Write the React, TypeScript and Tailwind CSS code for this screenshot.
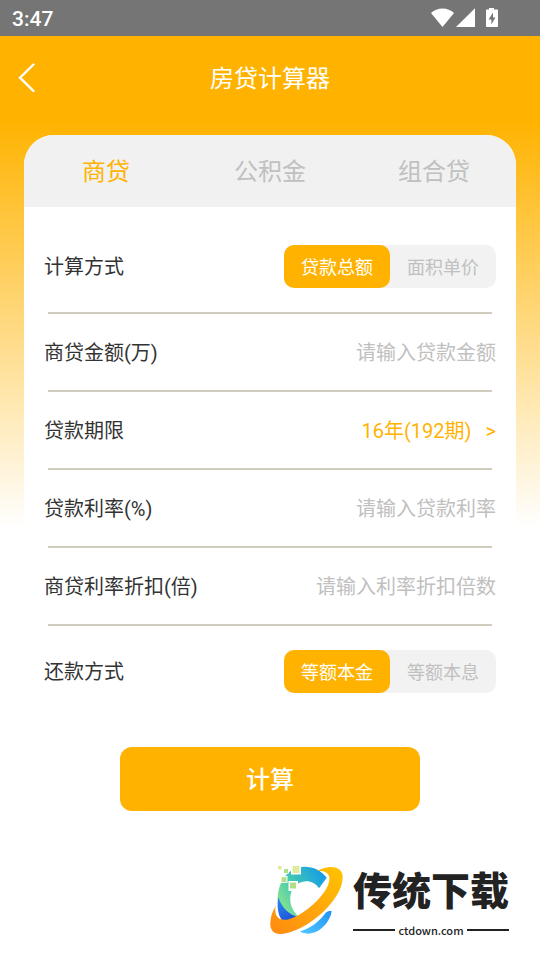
import { useState } from 'react';
import type { ReactNode } from 'react';
import clsx from 'clsx';

const tabs = ['商贷', '公积金', '组合贷'];
const calcModes = ['贷款总额', '面积单价'];
const repayModes = ['等额本金', '等额本息'];

function StatusBar() {
  return (
    <div className="flex h-9 items-center justify-between bg-[#757575] pr-10 pl-3 text-white">
      <span className="pt-0.5 text-[21px] leading-9 font-medium">3:47</span>
      <svg width="70" height="20" viewBox="0 0 70 20" fill="currentColor" aria-hidden="true">
        <path d="M12.500 19 1 5C4.200 2 8.200 .5 12.500 .5S20.800 2 24 5Z" />
        <path d="M26 19 45 .2V19Z" />
        <path
          fillRule="evenodd"
          d="M59 -.5h5v2h3.200c.5 0 .8.300.8.800v15.900c0 .5-.3.800-.8.800H56.800c-.5 0-.8-.3-.8-.8V2.300c0-.5.300-.8.800-.8H59ZM63 4.500 58.600 11.500H61.400V16.500L65.400 9.500H63Z"
        />
      </svg>
    </div>
  );
}

interface SegmentedProps {
  label: string;
  options: string[];
  value: string;
  onChange: (value: string) => void;
}

function Segmented({ label, options, value, onChange }: SegmentedProps) {
  return (
    <div role="group" aria-label={label} className="flex rounded-[10px] bg-[#f2f2f2]">
      {options.map((option) => (
        <button
          key={option}
          type="button"
          aria-pressed={option === value}
          onClick={() => onChange(option)}
          className={clsx(
            'h-[43px] w-[106px] rounded-[10px] pt-0.5 text-lg',
            option === value ? 'bg-[#ffb300] text-white' : 'text-[#c0c0c0]',
          )}
        >
          {option}
        </button>
      ))}
    </div>
  );
}

function Divider() {
  return <hr className="mx-1 border-t-2 border-[#d0cdbf]" />;
}

function Row({ label, htmlFor, tall, children }: { label: string; htmlFor?: string; tall?: boolean; children: ReactNode }) {
  return (
    <div className={clsx('flex items-center justify-between', tall ? 'py-6' : 'h-[76px] pt-0.5')}>
      {htmlFor ? <label htmlFor={htmlFor}>{label}</label> : <span>{label}</span>}
      {children}
    </div>
  );
}

function NumberField({ id, label, placeholder }: { id: string; label: string; placeholder: string }) {
  return (
    <Row label={label} htmlFor={id}>
      <input
        id={id}
        type="text"
        inputMode="decimal"
        placeholder={placeholder}
        className="w-1/2 bg-transparent text-right outline-none placeholder:text-[#c0c0c0]"
      />
    </Row>
  );
}

function Brand() {
  return (
    <footer className="mt-[53px] flex items-start justify-end pr-[31px] text-[#222222]">
      <svg width="76" height="72" viewBox="0 0 76 72" className="mr-2" aria-hidden="true">
        <defs>
          <linearGradient id="ring" x1="0" y1="1" x2="1" y2="0">
            <stop offset="0" stopColor="#ff8a10" />
            <stop offset="0.5" stopColor="#ffa60c" />
            <stop offset="1" stopColor="#ffc400" />
          </linearGradient>
          <linearGradient id="arc" x1="0" y1="0.8" x2="1" y2="0.2">
            <stop offset="0" stopColor="#8fe88a" />
            <stop offset="0.45" stopColor="#3fc6b4" />
            <stop offset="1" stopColor="#159be8" />
          </linearGradient>
          <linearGradient id="tail" x1="0" y1="0" x2="0.6" y2="1">
            <stop offset="0" stopColor="#2f8af5" />
            <stop offset="1" stopColor="#1b50d6" />
          </linearGradient>
          <linearGradient id="wave" x1="0" y1="1" x2="1" y2="0">
            <stop offset="0" stopColor="#52c8ff" />
            <stop offset="1" stopColor="#2191f3" />
          </linearGradient>
        </defs>
        <path fill="url(#arc)" d="M57.700 13.700C52 6 44 2.500 35 2.700 19 3 8.500 18 8.700 36 9 48 18 54 30.300 53.300 24 48 20 40 21.500 31 24 17 42 12 50 24.300Z" />
        <path fill="url(#tail)" d="M9.300 33C13 44 20 51 30.300 53.500 27 56 23 57.500 19.300 58.500 16 58.500 13 57 11.500 54 8.500 48 8 40 9.300 33Z" />
        <path fill="url(#wave)" d="M31 67.500C42 64 51 57 57 48.500 59 47 61 46.700 62.700 47 61 59 49 71 37 69.500 34.500 69 32.500 68.500 31 67.500Z" />
        <path
          fill="url(#ring)"
          d="M48.300 7C60 .5 72 2 73.500 11 75 23 65 38 53 49 41 60 25 69 12.500 70 3 70.500 .5 64 1.500 57 2 51 4 46.500 6.700 42 5 50 8 57.500 19 55.500 32 52 47 40 56 27 64 14 61 6 48.300 7Z"
        />
        <path fill="#fff" d="M22 .5h10v10H22ZM19.500 17H29v10H19.500ZM11.500 12h7v7h-7ZM14 3.500h6v6h-6Z" />
        <path fill="#dfeb9b" d="M23.500 2h7v7h-7ZM9 2h3.500v3.500H9Z" />
        <path fill="#b1df87" d="M21 18.500h6v6h-6ZM12.500 13.300h5v5h-5ZM15 5h4v4h-4Z" />
      </svg>
      <div className="w-[156px]">
        <div className="pt-1 text-[39px] leading-[48px] font-black whitespace-nowrap">传统下载</div>
        <div className="mt-1.5 flex items-center gap-[3px] font-['Noto_Sans_CJK_SC',sans-serif] text-[11px] leading-4 font-medium">
          <span className="h-0.5 flex-1 bg-[#222222]" />
          ctdown.com
          <span className="h-0.5 flex-1 bg-[#222222]" />
        </div>
      </div>
    </footer>
  );
}

export default function App() {
  const [tab, setTab] = useState(tabs[0]);
  const [calcMode, setCalcMode] = useState(calcModes[0]);
  const [repayMode, setRepayMode] = useState(repayModes[0]);

  return (
    <div className="min-h-screen bg-white font-[Roboto,'Noto_Sans_CJK_SC',sans-serif] text-xl text-[#333333]">
      <StatusBar />
      <div className="bg-linear-to-b/srgb from-[#ffb300] from-[84px] to-white to-[492px]">
        <header className="flex h-[84px] items-center px-3 text-white">
          <button type="button" aria-label="返回" className="w-8">
            <svg width="30" height="32" viewBox="0 0 30 32" fill="none" stroke="currentColor" strokeWidth="2.4" strokeLinecap="round" aria-hidden="true">
              <path d="M21.500 2.500 8 15.700 21.500 29" />
            </svg>
          </button>
          <h1 className="flex-1 pt-0.5 text-center text-2xl">房贷计算器</h1>
          <span className="w-8" />
        </header>

        <main className="px-6 pt-[15px]">
          <div className="overflow-hidden rounded-t-[30px] bg-white">
            <nav className="flex h-[72px] bg-[#f1f1f1]">
              {tabs.map((name) => (
                <button
                  key={name}
                  type="button"
                  onClick={() => setTab(name)}
                  className={clsx('flex-1 pt-0.5 text-2xl', name === tab ? 'text-[#ffb300]' : 'text-[#c0c0c0]')}
                >
                  {name}
                </button>
              ))}
            </nav>

            <div className="px-5 pt-3.5">
              <Row label="计算方式" tall>
                <Segmented label="计算方式" options={calcModes} value={calcMode} onChange={setCalcMode} />
              </Row>
              <Divider />
              <NumberField id="amount" label="商贷金额(万)" placeholder="请输入贷款金额" />
              <Divider />
              <Row label="贷款期限">
                <button type="button" className="flex gap-3.5 text-[#ffb300]">
                  <span>16年(192期)</span>
                  <span>&gt;</span>
                </button>
              </Row>
              <Divider />
              <NumberField id="rate" label="贷款利率(%)" placeholder="请输入贷款利率" />
              <Divider />
              <NumberField id="discount" label="商贷利率折扣(倍)" placeholder="请输入利率折扣倍数" />
              <Divider />
              <Row label="还款方式" tall>
                <Segmented label="还款方式" options={repayModes} value={repayMode} onChange={setRepayMode} />
              </Row>
            </div>
          </div>
        </main>
      </div>

      <div className="flex justify-center pt-[30px]">
        <button type="button" className="h-16 w-[300px] rounded-xl bg-[#ffb300] pt-0.5 text-2xl font-medium text-white">
          计算
        </button>
      </div>
      <Brand />
    </div>
  );
}
